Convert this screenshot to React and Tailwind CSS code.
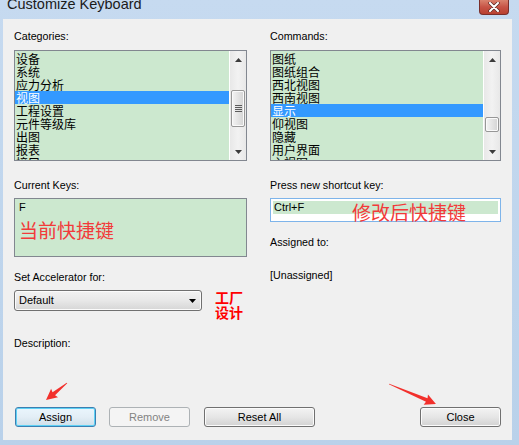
import React from 'react';

const cats = ['设备', '系统', '应力分析', '视图', '工程设置', '元件等级库', '出图', '报表', '接口'];
const cmds = ['图纸', '图纸组合', '西北视图', '西南视图', '显示', '仰视图', '隐藏', '用户界面', '主视图'];

const Arrow = ({ dir }) => (
    <svg width="7" height="4" viewBox="0 0 7 4">
        {dir === 'up'
            ? <path d="M0 4 L3.5 0 L7 4 Z" fill="#3c3c3c" />
            : <path d="M0 0 L3.5 4 L7 0 Z" fill="#3c3c3c" />}
    </svg>
);

const ScrollBar = ({ gap, thumb, grip }) => (
    <div className="w-[17px] flex flex-col bg-linear-to-r from-[#e8e8e8] via-[#f2f2f2] to-[#e8e8e8] border-l border-white">
        <div className="h-[17px] flex items-center justify-center"><Arrow dir="up" /></div>
        <div style={{ height: gap }} />
        <div style={{ height: thumb }} className="mx-[1px] rounded-[2px] border border-[#979797] bg-linear-to-r from-[#f4f4f4] to-[#d4d4d4] flex items-center justify-center shadow-[inset_0_0_0_1px_#fafafa]">
            {grip && (
                <svg width="7" height="8" viewBox="0 0 7 8">
                    <path d="M0 0.5 H7 M0 2.5 H7 M0 4.5 H7 M0 6.5 H7" stroke="#5c5c5c" strokeWidth="1" />
                </svg>
            )}
        </div>
        <div className="flex-1" />
        <div className="h-[17px] flex items-center justify-center"><Arrow dir="down" /></div>
    </div>
);

const ListBox = ({ items, selected, gap, thumb, grip }) => (
    <div className="h-[111px] border border-[#828790] bg-[#cce8cf] flex overflow-hidden">
        <div className="flex-1 pt-[1px] overflow-hidden font-['Noto_Sans_CJK_SC',sans-serif] text-[12px]">
            {items.map((t, i) => (
                <div key={t} className={i === selected ? 'h-[13px] leading-[13px] pl-[1px] bg-[#3399ff] text-white' : 'h-[13px] leading-[13px] pl-[1px] text-black'}>{t}</div>
            ))}
        </div>
        <ScrollBar gap={gap} thumb={thumb} grip={grip} />
    </div>
);

const Btn = ({ children, className }) => (
    <div className={'h-[20px] rounded-[3px] border flex items-center justify-center text-[11px] ' + className}>{children}</div>
);

const normalBtn = 'border-[#707070] bg-linear-to-b from-[#f3f3f3] via-[#e6e6e6] to-[#d2d2d2] shadow-[inset_0_0_0_1px_#fbfbfb] text-black';

const RedArrow = ({ x, y, len, angle }) => (
    <g transform={`translate(${x} ${y}) rotate(${angle})`}>
        <polygon points={`0,0.4 ${len - 10},2 ${len - 11},5.5 ${len},0 ${len - 11},-5.5 ${len - 10},-2 0,-0.4`} fill="#f2302c" />
    </g>
);

export default function App() {
    return (
        <div className="w-[519px] h-[445px] relative flex flex-col bg-linear-to-b from-[#c6daf0] to-[#b9d1ea] font-['Liberation_Sans',Arial,sans-serif] overflow-hidden">
            <div className="h-[19px] flex items-start justify-between pl-[7px] pr-[10px]">
                <span className="text-[14.5px] leading-[14px] -mt-[3px] text-[#1b1b1b]">Customize Keyboard</span>
                <div className="w-[30px] h-[15px] rounded-b-[4px] border border-t-0 border-[#7a2e2a] bg-linear-to-b from-[#d9826e] via-[#c75346] to-[#b8402f] flex items-center justify-center">
                    <svg width="12" height="10" viewBox="0 0 12 10">
                        <path d="M2 1 L10 9 M10 1 L2 9" stroke="#5a2a26" strokeWidth="3.4" strokeLinecap="round" />
                        <path d="M2 1 L10 9 M10 1 L2 9" stroke="#ffffff" strokeWidth="2" strokeLinecap="round" />
                    </svg>
                </div>
            </div>

            <div className="ml-[3px] w-[509px] h-[421px] bg-[#f0f0f0] pt-[11px] px-[11px] pb-[13px] flex flex-col text-[10.7px] leading-[13px] text-black">
                <div className="flex gap-[23px]">
                    <div className="w-[233px] flex flex-col">
                        <div className="h-[13px]">Categories:</div>
                        <div className="mt-[7px]"><ListBox items={cats} selected={3} gap={22} thumb={37} grip /></div>
                        <div className="mt-[18px] h-[13px]">Current Keys:</div>
                        <div className="mt-[6px] h-[59px] border border-[#828790] bg-[#cce8cf] px-[4px] pt-[2px]">
                            <div className="h-[13px] text-[11px]">F</div>
                            <div className="mt-[4px] text-[19px] leading-[24px] text-[#f23a3a] font-['Noto_Sans_CJK_SC',sans-serif]">当前快捷键</div>
                        </div>
                        <div className="mt-[14px] h-[13px]">Set Accelerator for:</div>
                        <div className="mt-[6px] h-[21px] flex items-start gap-[13px]">
                            <div className="w-[188px] h-[21px] rounded-[3px] border border-[#707070] bg-linear-to-b from-[#f2f2f2] via-[#e8e8e8] to-[#d6d6d6] shadow-[inset_0_0_0_1px_#fbfbfb] flex items-center justify-between pl-[4px] pr-[5px] text-[11px]">
                                <span>Default</span>
                                <svg width="7" height="4" viewBox="0 0 7 4"><path d="M0 0 L3.5 4 L7 0 Z" fill="#000" /></svg>
                            </div>
                            <div className="text-[14px] leading-[15px] font-bold text-[#ff0000] font-['Noto_Sans_CJK_SC',sans-serif] whitespace-nowrap">
                                <div>工厂</div>
                                <div>设计</div>
                            </div>
                        </div>
                        <div className="mt-[26px] h-[13px]">Description:</div>
                    </div>

                    <div className="w-[231px] flex flex-col">
                        <div className="h-[13px]">Commands:</div>
                        <div className="mt-[7px]"><ListBox items={cmds} selected={4} gap={49} thumb={15} /></div>
                        <div className="mt-[18px] h-[13px]">Press new shortcut key:</div>
                        <div className="mt-[6px] relative h-[24px] border border-[#7eb4ea] bg-white p-[2px]">
                            <div className="h-[13px] bg-[#cce8cf] pl-[1px] text-[11px] leading-[13px]">Ctrl+F</div>
                            <div className="absolute left-[81px] top-[1px] text-[19px] leading-[24px] text-[#f23a3a] font-['Noto_Sans_CJK_SC',sans-serif]">修改后快捷键</div>
                        </div>
                        <div className="mt-[14px] h-[13px]">Assigned to:</div>
                        <div className="mt-[20px] h-[13px]">[Unassigned]</div>
                    </div>
                </div>

                <div className="mt-auto flex items-center pl-[1px]">
                    <Btn className="w-[81px] border-[#3c7fb1] bg-linear-to-b from-[#eaf6fd] via-[#e3eef6] to-[#cfdfe9] shadow-[inset_0_0_0_1px_#5ed1f5] text-black">Assign</Btn>
                    <Btn className="ml-[13px] w-[81px] border-[#adb2b5] bg-[#f4f4f4] text-[#838383]">Remove</Btn>
                    <Btn className={'ml-[14px] w-[111px] ' + normalBtn}>Reset All</Btn>
                    <Btn className={'ml-auto w-[81px] ' + normalBtn}>Close</Btn>
                </div>
            </div>
            <div className="h-[5px]" />

            <svg className="absolute inset-0 pointer-events-none" width="519" height="445">
                <RedArrow x={67} y={383} len={27} angle={141} />
                <RedArrow x={389} y={384} len={51} angle={23} />
            </svg>
        </div>
    );
}
